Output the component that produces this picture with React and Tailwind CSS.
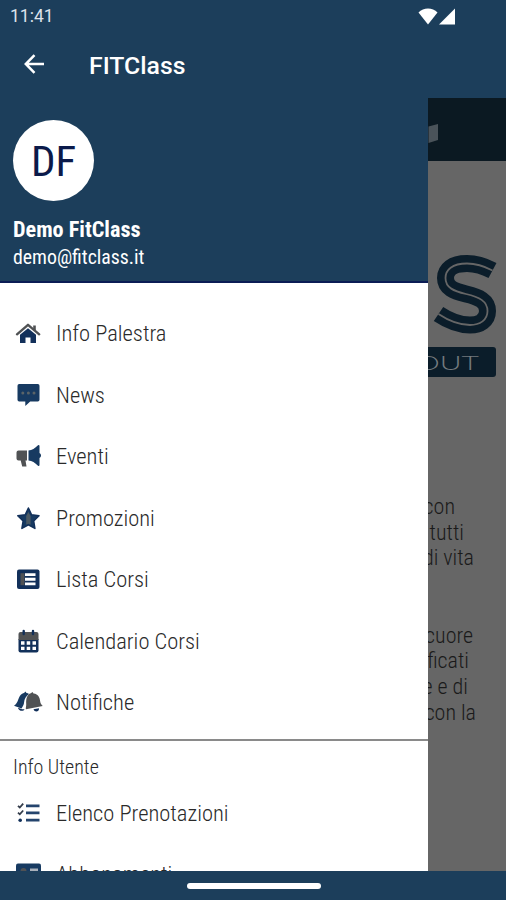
import React from 'react';

const NAVY = '#12305a';
const GREY = '#505254';

function HomeIcon() {
  return (
    <svg width="28" height="28" viewBox="0 0 28 28">
      <path d="M6 14.800 14 8.300l8 6.500V23h-5.500v-5.500h-5V23H6z" fill={NAVY} />
      <path d="M3 14.300 14 4.800l11.200 9.500" fill="none" stroke={GREY} strokeWidth="2.400" strokeLinecap="round" strokeLinejoin="round" />
      <path d="M19.200 5.500h2.600v6L19.200 9z" fill={GREY} />
    </svg>
  );
}

function NewsIcon() {
  return (
    <svg width="28" height="28" viewBox="0 0 28 28">
      <path d="M5.200 2h18.600a1.800 1.800 0 0 1 1.700 1.800v14a1.800 1.800 0 0 1-1.700 1.800h-7.600L11.300 24v-4.400H5.200a1.800 1.800 0 0 1-1.700-1.800v-14A1.800 1.800 0 0 1 5.200 2z" fill="#173a61" />
      <circle cx="8.800" cy="11" r="1.500" fill="#5b6468" />
      <circle cx="14.400" cy="11" r="1.500" fill="#5b6468" />
      <circle cx="20" cy="11" r="1.500" fill="#5b6468" />
    </svg>
  );
}

function MegaphoneIcon() {
  return (
    <svg width="28" height="28" viewBox="0 0 28 28">
      <path d="M4.500 7.500H13v10H11.500l1 6H8.200l-1.500-6H4.500a2 2 0 0 1-2-2v-6a2 2 0 0 1 2-2z" fill={GREY} />
      <path d="M14.500 7.500c3.500 0 6.500-2.500 9.500-5.300q1.500-.7 1.500 1V10a2.800 2.800 0 0 1 0 5v6.800q0 1.700-1.500 1c-3-2.800-6-5.300-9.500-5.300z" fill="#173a61" />
    </svg>
  );
}

function StarIcon() {
  return (
    <svg width="28" height="28" viewBox="0 0 28 28">
      <path d="m14.400 3 3.200 6.700 7.400 1.100-5.300 5.200 1.200 7.400-6.500-3.500-6.500 3.500 1.200-7.400-5.300-5.200 7.400-1.100z" fill="#173a61" stroke={NAVY} strokeWidth="1.500" strokeLinejoin="round" />
      <path d="m14.400 7 2.200 4v8.700l-2.200-1-2.200 1V11z" fill="#4b5963" />
    </svg>
  );
}

function ListIcon() {
  return (
    <svg width="28" height="28" viewBox="0 0 28 28">
      <rect x="3" y="3.500" width="22.500" height="19.500" rx="2" fill={NAVY} />
      <rect x="6.500" y="7.200" width="4" height="12" fill={GREY} />
      <path d="M11 7.200h10.500V10H11zM11 11.800h10.500v3H11zM11 16.500h10.500v2.800H11z" fill="#fff" />
    </svg>
  );
}

function CalendarIcon() {
  return (
    <svg width="28" height="28" viewBox="0 0 28 28">
      <path d="M4.500 11h20v11.500a2 2 0 0 1-2 2h-16a2 2 0 0 1-2-2z" fill={NAVY} />
      <path d="M6.500 4h16a2 2 0 0 1 2 2v6h-20V6a2 2 0 0 1 2-2z" fill={GREY} />
      <path d="M9.700 3v3M19 3v3" stroke={NAVY} strokeWidth="2.400" strokeLinecap="round" />
      <path d="M7 13.300h3.500v3.500H7zM12.700 13.300h3.500v3.500h-3.500zM18.500 13.300H22v3.500h-3.500zM7 18.800h3.500v3.300H7zM12.700 18.800h3.500v3.300h-3.500zM18.500 18.800H22v3.300h-3.500z" fill="#fff" />
    </svg>
  );
}

function BellsIcon() {
  return (
    <svg width="28" height="28" viewBox="0 0 28 28" className="overflow-visible">
      <path d="M0 16.800C4 14 4 10 6 6.800 7.500 4.500 9 4 10 3.900L11.500 2.500l1 1.500c1 0 1.800.4 2.500 1-3 2-4.700 5-4.900 8.300-.1 2.700-1.400 4-2.600 6.200z" fill="#173a61" />
      <path d="M4 18.700l4 1.600h2.500c-1 2.700-6.200 1.700-6.500-1.600z" fill={NAVY} />
      <path d="M16.800 4.200 18.500 3l1 1.500c5 .3 6.300 4.500 6.600 7.500.3 2.200 1 3.200 2.600 4.900L12 20.200c-.6-.7.400-2.500.2-5.500-.3-4.500.6-9.300 4.600-10.500z" fill={GREY} />
      <path d="M19.500 20.200l5.500-1c.3 3.700-4.300 4.500-5.500 1z" fill={NAVY} />
    </svg>
  );
}

function ChecklistIcon() {
  return (
    <svg width="28" height="28" viewBox="0 0 28 28">
      <path d="M4 5.800l1.800 1.700L9.200 3.700M4 12.600l1.800 1.700 3.400-3.800" fill="none" stroke="#333c4a" strokeWidth="1.800" />
      <circle cx="6.200" cy="20.200" r="1.800" fill={NAVY} />
      <path d="M12 5.900h13.500M12 12.900h13.500M12 20.200h13.500" stroke="#24446d" strokeWidth="2.700" />
    </svg>
  );
}

function CardIcon() {
  return (
    <svg width="28" height="28" viewBox="0 0 28 28">
      <rect x="2" y="2.500" width="25" height="20" rx="2" fill="#173a61" />
      <circle cx="9.500" cy="10" r="3" fill={GREY} />
      <path d="M16 7.500h8V10h-8z" fill="#a9b0ba" />
    </svg>
  );
}

const menuItems = [
  { label: 'Info Palestra', icon: HomeIcon },
  { label: 'News', icon: NewsIcon },
  { label: 'Eventi', icon: MegaphoneIcon },
  { label: 'Promozioni', icon: StarIcon },
  { label: 'Lista Corsi', icon: ListIcon },
  { label: 'Calendario Corsi', icon: CalendarIcon },
  { label: 'Notifiche', icon: BellsIcon },
];

const userItems = [
  { label: 'Elenco Prenotazioni', icon: ChecklistIcon },
  { label: 'Abbonamenti', icon: CardIcon },
];

function MenuItem({ item }) {
  const Icon = item.icon;
  return (
    <button className="flex h-[61.5px] w-full shrink-0 items-center gap-[14px] pl-[14px] text-left">
      <Icon />
      <span className="whitespace-nowrap text-[22.5px] font-light text-[#2a2a2a]">{item.label}</span>
    </button>
  );
}

function TopBar() {
  return (
    <header className="flex h-[98px] shrink-0 flex-col text-white [font-stretch:100%]">
      <div className="flex h-8 items-center justify-between pl-[10px] pr-[50px]">
        <span className="text-[17.500px] text-[#dde3ec]">11:41</span>
        <div className="flex items-center gap-[1px]">
          <svg width="20" height="17" viewBox="0 0 20 17">
            <path d="M10 16.500.5 4.500C5.500-.7 14.500-.7 19.500 4.500z" fill="#fff" />
          </svg>
          <svg width="17" height="17" viewBox="0 0 17 17">
            <path d="M16 .5v16H0z" fill="#fff" />
          </svg>
        </div>
      </div>
      <div className="flex h-[66px] items-center gap-[44px] pl-6">
        <svg width="21" height="20" viewBox="0 0 21 20" className="-mt-[2px]">
          <path d="M20 10H2M10.500 1.200 1.800 10l8.700 8.800" fill="none" stroke="#fff" strokeWidth="2.500" />
        </svg>
        <h1 className="pt-[1px] text-[24.800px] font-medium leading-8">FITClass</h1>
      </div>
    </header>
  );
}

function Drawer() {
  return (
    <aside className="flex w-[428px] shrink-0 flex-col overflow-hidden bg-white">
      <div className="flex h-[185px] shrink-0 flex-col border-b-2 border-[#0b1c55] bg-[#1c3e5b] pl-[13px] pt-[22px] text-white">
        <div className="flex h-[81px] w-[81px] items-center justify-center rounded-full bg-white pt-[2px] text-[43px] font-[370] text-[#0b1a4a]">
          DF
        </div>
        <p className="mt-[13px] text-[22.200px] font-bold leading-[30px]">Demo FitClass</p>
        <p className="text-[19.800px] leading-7">demo@fitclass.it</p>
      </div>
      <nav className="flex shrink-0 flex-col pt-[20.500px]">
        {menuItems.map((item) => (
          <MenuItem key={item.label} item={item} />
        ))}
      </nav>
      <div className="mt-[4.500px] flex flex-col border-t-2 border-[#8a8a8a] pt-[11px]">
        <p className="mb-[1.500px] pl-[13px] text-[20px] font-light leading-[30px] text-[#2a2a2a]">Info Utente</p>
        {userItems.map((item) => (
          <MenuItem key={item.label} item={item} />
        ))}
      </div>
    </aside>
  );
}

function DimmedPage() {
  return (
    <main className="flex min-w-0 flex-1 flex-col overflow-hidden bg-[#666] text-[22px] font-[350] leading-[25.7px] text-[#1a1a1a]">
      <div className="h-[63px] shrink-0 bg-[#0b1922]">
        <svg width="78" height="63" viewBox="0 0 78 63">
          <path d="M.5 28.500 10 26v16L.5 45z" fill="#4a535a" />
        </svg>
      </div>
      <svg width="78" height="220" viewBox="428 161 78 220" className="shrink-0">
        <path d="M492.500 270.500C484 266 476 263.500 467 263.500C452 263.500 445.500 270 445.500 278C445.500 288 454 291 466 294C479 297 487.500 301 487.500 311C487.500 320 480 325 470 325C459 325 449 321 438.500 314" fill="none" stroke="#0b1d2a" strokeWidth="17" />
        <path d="M492.500 270.500C484 266 476 263.500 467 263.500C452 263.500 445.500 270 445.500 278C445.500 288 454 291 466 294C479 297 487.500 301 487.500 311C487.500 320 480 325 470 325C459 325 449 321 438.500 314" fill="none" stroke="#666" strokeWidth="1.800" />
        <rect x="400" y="347" width="96" height="30" rx="3" fill="#0b1d2a" />
        <text x="416" y="369.500" textLength="63" lengthAdjust="spacingAndGlyphs" fontFamily="Lato" fontSize="20.500" fontWeight="300" fill="#747a7e">OUT</text>
      </svg>
      <div className="mt-[113px] flex shrink-0 flex-col whitespace-nowrap">
        <p className="flex justify-end pr-[51px]">con</p>
        <p className="flex justify-end pr-[42px]">tutti</p>
        <p className="flex justify-end pr-[32px]">di vita</p>
        <p className="mt-[51.400px] flex justify-end pr-[33px]">cuore</p>
        <p className="flex justify-end pr-[37px]">ficati</p>
        <p className="flex justify-end pr-[38px]">e e di</p>
        <p className="flex justify-end pr-[30px]">con la</p>
      </div>
    </main>
  );
}

export default function App() {
  return (
    <div className="flex h-[900px] w-[506px] flex-col overflow-hidden bg-[#1c3e5b] font-[Roboto,sans-serif] [font-stretch:75%]">
      <TopBar />
      <div className="flex h-[773px] shrink-0">
        <Drawer />
        <DimmedPage />
      </div>
      <footer className="flex flex-1 justify-center pl-[1px] pt-3">
        <div className="h-[6px] w-[134px] rounded-full bg-white" />
      </footer>
    </div>
  );
}
